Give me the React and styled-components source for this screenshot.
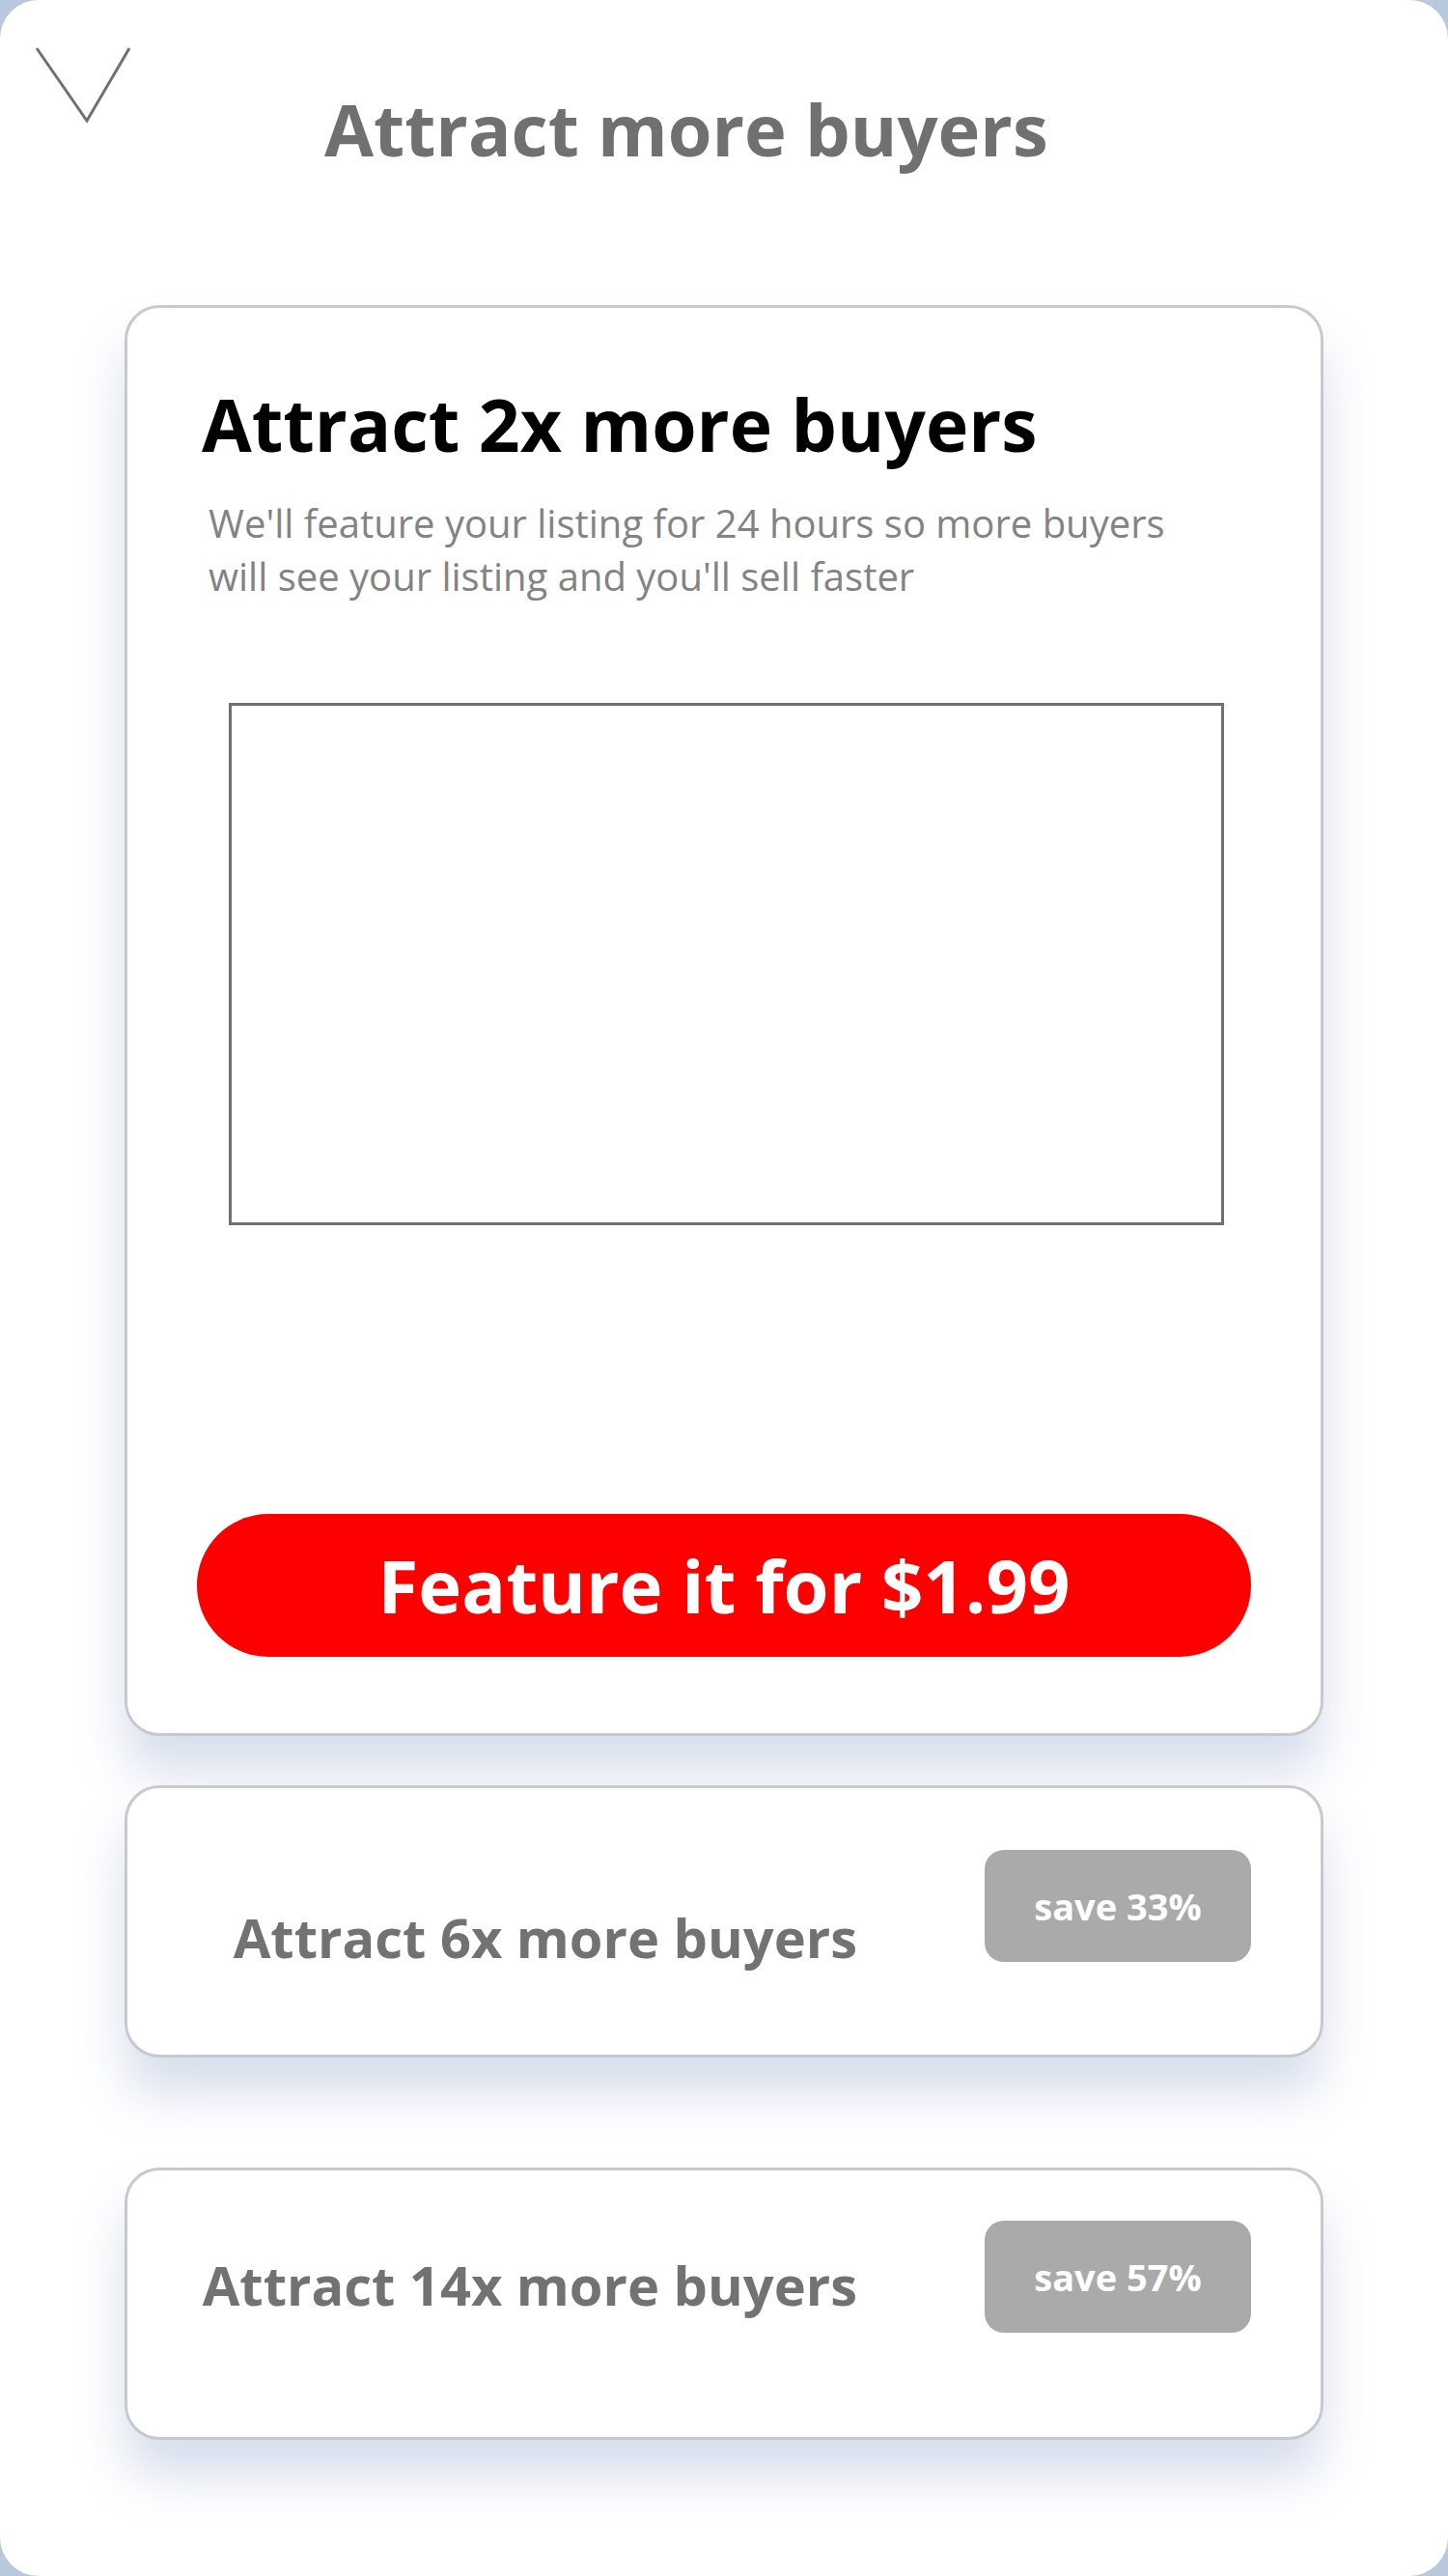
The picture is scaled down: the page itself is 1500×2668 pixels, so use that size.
import React from 'react';
import styled, { createGlobalStyle } from 'styled-components';

const GlobalStyle = createGlobalStyle`
	html, body {
		margin: 0;
		padding: 0;
		background: #b9c8dc;
	}
	* {
		box-sizing: border-box;
	}
`;

const Page = styled.div`
	min-height: 2668px;
	background: #fff;
	border-radius: 40px;
	font-family: 'Open Sans', 'Noto Sans', sans-serif;
	overflow: hidden;
`;

const Header = styled.div`
	display: flex;
	align-items: flex-start;
	padding: 48px 0 0 36px;
`;

const BackButton = styled.button`
	width: 100px;
	height: 80px;
	padding: 0;
	border: 0;
	background: transparent;
	cursor: pointer;
`;

const Title = styled.h1`
	margin: 36px 0 0 200px;
	font-size: 74px;
	line-height: 100px;
	font-weight: 700;
	color: #707070;
	white-space: nowrap;
`;

const Card = styled.div`
	width: 1242px;
	margin: ${props => props.gap}px auto 0;
	border: 3px solid #c8c9cc;
	border-radius: 36px;
	background: #fff;
	box-shadow: 0 38px 50px rgba(110, 135, 185, 0.28);
`;

const FeatureCard = styled(Card)`
	padding: 70px 72px 79px;
`;

const Heading = styled.h2`
	margin: 0;
	padding-left: 5px;
	font-size: 75px;
	line-height: 100px;
	font-weight: 700;
	color: #000;
	white-space: nowrap;
`;

const Description = styled.p`
	margin: 25px 0 0;
	padding-left: 12px;
	max-width: 1037px;
	font-size: 40px;
	line-height: 55px;
	font-weight: 400;
	color: #838383;
`;

const Preview = styled.div`
	width: 1031px;
	height: 541px;
	margin: 104px 0 0 33px;
	border: 3px solid #707070;
	background: #fff;
`;

const FeatureButton = styled.button`
	display: block;
	width: 100%;
	height: 148px;
	margin-top: 299px;
	border: 0;
	border-radius: 74px;
	background: #ff0000;
	color: #fff;
	font-family: inherit;
	font-size: 76px;
	line-height: 148px;
	font-weight: 700;
	padding: 0;
	cursor: pointer;
`;

const OptionCard = styled(Card)`
	height: 282px;
	display: flex;
	align-items: flex-start;
	justify-content: flex-end;
	padding: 0 72px;
`;

const OptionLabel = styled.div`
	margin-top: ${props => props.offset}px;
	margin-right: 132px;
	font-size: 56px;
	line-height: 80px;
	font-weight: 700;
	color: #727272;
	white-space: nowrap;
`;

const SaveBadge = styled.div`
	flex: 0 0 276px;
	height: 116px;
	margin-top: ${props => props.offset}px;
	border-radius: 20px;
	background: #aaaaaa;
	color: #fff;
	display: flex;
	align-items: center;
	justify-content: center;
	font-size: 38px;
	font-weight: 700;
`;

const options = [
	{ label: 'Attract 6x more buyers', save: 'save 33%', gap: 51, labelTop: 114, badgeTop: 64 },
	{ label: 'Attract 14x more buyers', save: 'save 57%', gap: 114, labelTop: 78, badgeTop: 52 },
];

export default function App() {
	return (
		<Page>
			<GlobalStyle />
			<Header>
				<BackButton aria-label="Close">
					<svg width="100" height="80" viewBox="0 0 100 80">
						<polyline
							points="2,2 54,77 98,2"
							fill="none"
							stroke="#707070"
							strokeWidth="3"
						/>
					</svg>
				</BackButton>
				<Title>Attract more buyers</Title>
			</Header>

			<FeatureCard gap={132}>
				<Heading>Attract 2x more buyers</Heading>
				<Description>
					We'll feature your listing for 24 hours so more buyers will see your
					listing and you'll sell faster
				</Description>
				<Preview />
				<FeatureButton>Feature it for $1.99</FeatureButton>
			</FeatureCard>

			{options.map(opt => (
				<OptionCard key={opt.label} gap={opt.gap}>
					<OptionLabel offset={opt.labelTop}>{opt.label}</OptionLabel>
					<SaveBadge offset={opt.badgeTop}>{opt.save}</SaveBadge>
				</OptionCard>
			))}
		</Page>
	);
}
